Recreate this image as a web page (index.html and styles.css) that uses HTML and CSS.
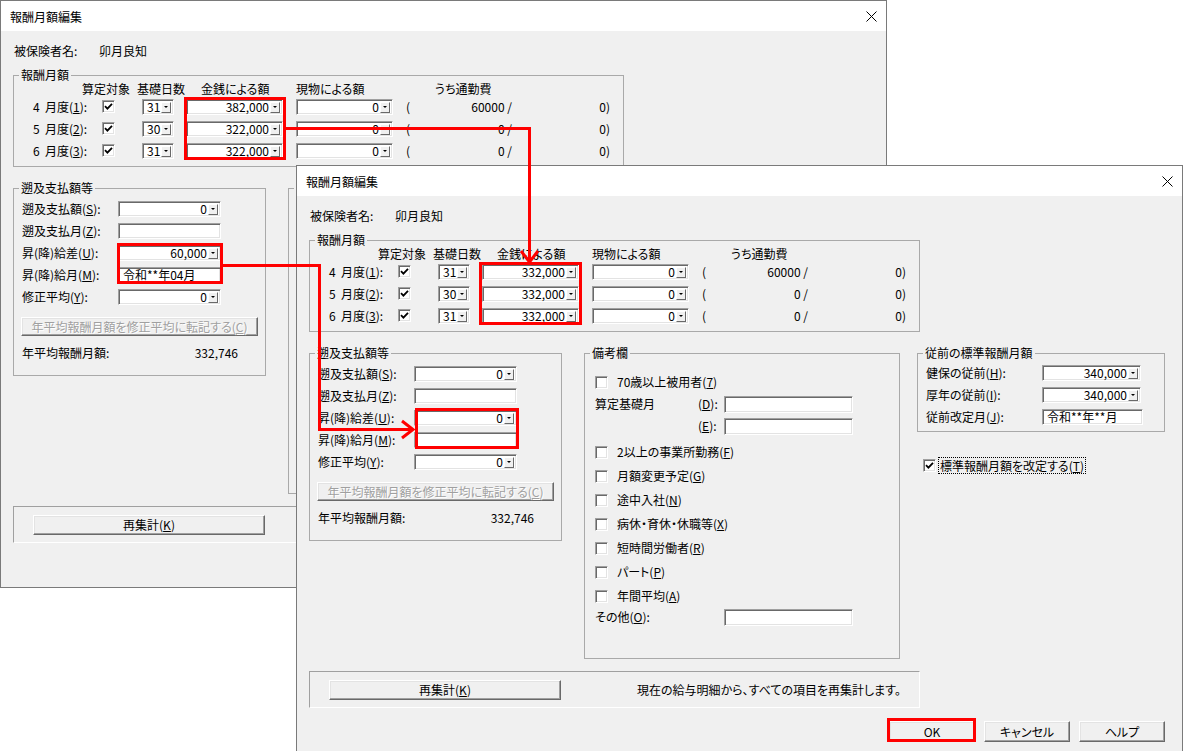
FILE: index.html
```html
<!doctype html>
<html lang="ja">
  <head>
    <meta charset="utf-8">
    <meta name="viewport" content="width=device-width, initial-scale=1">
    <title>報酬月額編集</title>
    <link rel="stylesheet" href="styles.css">
  </head>
  <body>
    <div class="desk">

      <!-- back window (before); the parts under the front window are left out -->
      <div class="win win-back">
        <div class="titlebar">
          <span>報酬月額編集</span>
          <svg width="11" height="11" viewBox="0 0 11 11"><path d="M0.5 0.5L10.5 10.5M10.5 0.5L0.5 10.5" stroke="#000" fill="none"/></svg>
        </div>
        <div class="dlg">
          <div class="insured"><span>被保険者名:</span><span>卯月良知</span></div>
          <fieldset class="grp-month">
            <legend>報酬月額</legend>
            <div class="months">
              <span></span><span>算定対象</span><span>基礎日数</span><span class="h-money">金銭による額</span><span>現物による額</span><span class="h-comm">うち通勤費</span><span></span>

              <span class="mlabel"><b class="mno">4</b>月度(<u>1</u>):</span>
              <span class="chk"><svg width="9" height="9" viewBox="0 0 9 9"><path d="M1 4.2l2.4 2.4L8 1.8" fill="none" stroke="#000" stroke-width="1.8"/></svg></span>
              <div class="fld days">31<i class="drop"></i></div>
              <div class="fld money">382,000<i class="drop"></i></div>
              <div class="fld money">0<i class="drop"></i></div>
              <span class="comm"><span>(</span><span>60000 /</span></span>
              <span class="tail">0)</span>

              <span class="mlabel"><b class="mno">5</b>月度(<u>2</u>):</span>
              <span class="chk"><svg width="9" height="9" viewBox="0 0 9 9"><path d="M1 4.2l2.4 2.4L8 1.8" fill="none" stroke="#000" stroke-width="1.8"/></svg></span>
              <div class="fld days">30<i class="drop"></i></div>
              <div class="fld money">322,000<i class="drop"></i></div>
              <div class="fld money">0<i class="drop"></i></div>
              <span class="comm"><span>(</span><span>0 /</span></span>
              <span class="tail">0)</span>

              <span class="mlabel"><b class="mno">6</b>月度(<u>3</u>):</span>
              <span class="chk"><svg width="9" height="9" viewBox="0 0 9 9"><path d="M1 4.2l2.4 2.4L8 1.8" fill="none" stroke="#000" stroke-width="1.8"/></svg></span>
              <div class="fld days">31<i class="drop"></i></div>
              <div class="fld money">322,000<i class="drop"></i></div>
              <div class="fld money">0<i class="drop"></i></div>
              <span class="comm"><span>(</span><span>0 /</span></span>
              <span class="tail">0)</span>
            </div>
          </fieldset>

          <div class="mid">
            <fieldset class="grp-retro">
              <legend>遡及支払額等</legend>
              <div class="retro">
                <div class="form">
                  <span>遡及支払額(<u>S</u>):</span><div class="fld">0<i class="drop"></i></div>
                  <span>遡及支払月(<u>Z</u>):</span><div class="fld txt"></div>
                  <span>昇(降)給差(<u>U</u>):</span><div class="fld">60,000<i class="drop"></i></div>
                  <span>昇(降)給月(<u>M</u>):</span><div class="fld txt">令和**年04月</div>
                  <span>修正平均(<u>Y</u>):</span><div class="fld">0<i class="drop"></i></div>
                </div>
                <button class="btn btn-copy" disabled>年平均報酬月額を修正平均に転記する(<u>C</u>)</button>
                <div class="annual"><span>年平均報酬月額:</span><span>332,746</span></div>
              </div>
            </fieldset>
            <fieldset class="grp-memo">
              <legend></legend>
            </fieldset>
          </div>

          <div class="recalc">
            <button class="btn btn-recalc">再集計(<u>K</u>)</button>
          </div>
        </div>
      </div>

      <!-- front window (after) -->
      <div class="win win-front">
        <div class="titlebar">
          <span>報酬月額編集</span>
          <svg width="11" height="11" viewBox="0 0 11 11"><path d="M0.5 0.5L10.5 10.5M10.5 0.5L0.5 10.5" stroke="#000" fill="none"/></svg>
        </div>
        <div class="dlg">
          <div class="insured"><span>被保険者名:</span><span>卯月良知</span></div>
          <fieldset class="grp-month">
            <legend>報酬月額</legend>
            <div class="months">
              <span></span><span>算定対象</span><span>基礎日数</span><span class="h-money">金銭による額</span><span>現物による額</span><span class="h-comm">うち通勤費</span><span></span>

              <span class="mlabel"><b class="mno">4</b>月度(<u>1</u>):</span>
              <span class="chk"><svg width="9" height="9" viewBox="0 0 9 9"><path d="M1 4.2l2.4 2.4L8 1.8" fill="none" stroke="#000" stroke-width="1.8"/></svg></span>
              <div class="fld days">31<i class="drop"></i></div>
              <div class="fld money">332,000<i class="drop"></i></div>
              <div class="fld money">0<i class="drop"></i></div>
              <span class="comm"><span>(</span><span>60000 /</span></span>
              <span class="tail">0)</span>

              <span class="mlabel"><b class="mno">5</b>月度(<u>2</u>):</span>
              <span class="chk"><svg width="9" height="9" viewBox="0 0 9 9"><path d="M1 4.2l2.4 2.4L8 1.8" fill="none" stroke="#000" stroke-width="1.8"/></svg></span>
              <div class="fld days">30<i class="drop"></i></div>
              <div class="fld money">332,000<i class="drop"></i></div>
              <div class="fld money">0<i class="drop"></i></div>
              <span class="comm"><span>(</span><span>0 /</span></span>
              <span class="tail">0)</span>

              <span class="mlabel"><b class="mno">6</b>月度(<u>3</u>):</span>
              <span class="chk"><svg width="9" height="9" viewBox="0 0 9 9"><path d="M1 4.2l2.4 2.4L8 1.8" fill="none" stroke="#000" stroke-width="1.8"/></svg></span>
              <div class="fld days">31<i class="drop"></i></div>
              <div class="fld money">332,000<i class="drop"></i></div>
              <div class="fld money">0<i class="drop"></i></div>
              <span class="comm"><span>(</span><span>0 /</span></span>
              <span class="tail">0)</span>
            </div>
          </fieldset>

          <div class="mid">
            <fieldset class="grp-retro">
              <legend>遡及支払額等</legend>
              <div class="retro">
                <div class="form">
                  <span>遡及支払額(<u>S</u>):</span><div class="fld">0<i class="drop"></i></div>
                  <span>遡及支払月(<u>Z</u>):</span><div class="fld txt"></div>
                  <span>昇(降)給差(<u>U</u>):</span><div class="fld">0<i class="drop"></i></div>
                  <span>昇(降)給月(<u>M</u>):</span><div class="fld txt"></div>
                  <span>修正平均(<u>Y</u>):</span><div class="fld">0<i class="drop"></i></div>
                </div>
                <button class="btn btn-copy" disabled>年平均報酬月額を修正平均に転記する(<u>C</u>)</button>
                <div class="annual"><span>年平均報酬月額:</span><span>332,746</span></div>
              </div>
            </fieldset>

            <fieldset class="grp-memo">
              <legend>備考欄</legend>
              <div class="memo">
                <div class="cb"><span class="chk"></span><span>70歳以上被用者(<u>7</u>)</span></div>
                <div class="memo-in up"><span class="k">算定基礎月</span><span class="p">(<u>D</u>):</span><div class="fld txt"></div></div>
                <div class="memo-in up"><span class="k"></span><span class="p">(<u>E</u>):</span><div class="fld txt"></div></div>
                <div class="cb down"><span class="chk"></span><span>2以上の事業所勤務(<u>F</u>)</span></div>
                <div class="cb"><span class="chk"></span><span>月額変更予定(<u>G</u>)</span></div>
                <div class="cb"><span class="chk"></span><span>途中入社(<u>N</u>)</span></div>
                <div class="cb"><span class="chk"></span><span>病休・育休・休職等(<u>X</u>)</span></div>
                <div class="cb"><span class="chk"></span><span>短時間労働者(<u>R</u>)</span></div>
                <div class="cb"><span class="chk"></span><span>パート(<u>P</u>)</span></div>
                <div class="cb"><span class="chk"></span><span>年間平均(<u>A</u>)</span></div>
                <div class="memo-in last"><span class="k wide">その他(<u>O</u>):</span><div class="fld txt"></div></div>
              </div>
            </fieldset>

            <div class="right-col">
              <fieldset class="grp-prev">
                <legend>従前の標準報酬月額</legend>
                <div class="prev">
                  <div class="form prev-form">
                    <span>健保の従前(<u>H</u>):</span><div class="fld">340,000<i class="drop"></i></div>
                    <span>厚年の従前(<u>I</u>):</span><div class="fld">340,000<i class="drop"></i></div>
                    <span>従前改定月(<u>J</u>):</span><div class="fld txt wide">令和**年**月</div>
                  </div>
                </div>
              </fieldset>
              <div class="revise">
                <span class="chk"><svg width="9" height="9" viewBox="0 0 9 9"><path d="M1 4.2l2.4 2.4L8 1.8" fill="none" stroke="#000" stroke-width="1.8"/></svg></span>
                <span class="focus">標準報酬月額を改定する(<u>T</u>)</span>
              </div>
            </div>
          </div>

          <div class="recalc">
            <button class="btn btn-recalc">再集計(<u>K</u>)</button>
            <span>現在の給与明細から、すべての項目を再集計します。</span>
          </div>

          <div class="footer">
            <button class="btn">OK</button>
            <button class="btn">キャンセル</button>
            <button class="btn">ヘルプ</button>
          </div>
        </div>
      </div>

      <!-- red call-outs -->
      <svg class="marks" width="1183" height="751" viewBox="0 0 1183 751">
        <g fill="none" stroke="#f00" stroke-width="3">
          <rect x="185.5" y="98.5" width="99" height="60"/>
          <polyline points="286,128.5 529.5,128.5 529.5,261"/>
          <polyline points="521,251 529.5,262 538,251"/>
          <rect x="480.5" y="263.5" width="100" height="60"/>
          <rect x="118.5" y="244.5" width="103" height="38"/>
          <polyline points="223,265.5 319.5,265.5 319.5,429.5 412,429.5"/>
          <polyline points="402,421 413,429.5 402,438"/>
          <rect x="416.5" y="409.5" width="101" height="38"/>
          <rect x="888.5" y="719.5" width="86" height="21"/>
        </g>
      </svg>
    </div>
  </body>
</html>
```

FILE: styles.css
```css
body {
  margin: 0;
  background: #fff;
  font-family: "Noto Sans CJK JP", "Noto Sans", sans-serif;
  font-size: 12px;
  font-feature-settings: "palt";
  color: #000;
}
u {
  text-underline-offset: 1px;
}
.desk {
  position: relative;
  width: 1183px;
  height: 751px;
  overflow: hidden;
}
.win {
  position: absolute;
  width: 887px;
  height: 588px;
  box-sizing: border-box;
  border: 1px solid #7a7a7a;
  background: #f0f0f0;
}
.win-back {
  left: 0;
  top: 0;
}
.win-front {
  left: 296px;
  top: 165px;
}
.titlebar {
  height: 30px;
  background: #fff;
  display: flex;
  align-items: center;
  justify-content: space-between;
  padding: 0 9px;
}
.titlebar svg {
  display: block;
}
.dlg {
  padding: 12px 17px 0 12px;
  line-height: 16px;
  white-space: nowrap;
}
.insured {
  display: flex;
  height: 16px;
  padding-left: 1px;
}
.insured span:first-child {
  width: 85px;
}

/* group boxes */
fieldset {
  margin: 0;
  padding: 0;
  min-width: 0;
  box-sizing: border-box;
  border: 1px solid #a9a9a9;
}
legend {
  margin-left: 5px;
  padding: 0 2px;
  line-height: 12px;
}
legend:empty {
  height: 12px;
}
.grp-month {
  margin-top: 10px;
  width: 611px;
}
.months {
  display: grid;
  grid-template-columns: 49px 55px 49px 110px 110px 114px 91px;
  grid-template-rows: 18px repeat(3, 22px);
  align-items: start;
  padding: 0 0 1px 19px;
}
.mlabel {
  white-space: nowrap;
}
.mno {
  display: inline-block;
  width: 12px;
  font-weight: normal;
}
.h-money {
  margin-left: 15px;
}
.h-comm {
  margin-left: 29px;
}
.comm {
  display: flex;
  justify-content: space-between;
  padding-right: 8px;
}
.tail {
  text-align: right;
  padding-right: 1px;
}
.months .chk {
  margin: 1px 0 0 20px;
}
.months .days {
  margin-left: 5px;
  width: 32px;
}
.months .money {
  width: 97px;
}

/* edit fields */
.fld {
  box-sizing: border-box;
  height: 16px;
  background: #fff;
  border: 1px solid;
  border-color: #a0a0a0 #fff #fff #a0a0a0;
  box-shadow: inset 1px 1px 0 #696969, inset -1px -1px 0 #e3e3e3;
  display: flex;
  align-items: center;
  justify-content: flex-end;
  padding: 0 2px 0 4px;
  line-height: 14px;
  white-space: nowrap;
}
.fld.txt {
  justify-content: flex-start;
}
.drop {
  width: 10px;
  height: 11px;
  box-sizing: border-box;
  margin-left: 1px;
  background: #f0f0f0;
  border: 1px solid;
  border-color: #fff #696969 #696969 #fff;
  display: flex;
  align-items: center;
  justify-content: center;
}
.drop::after {
  content: "";
  border-left: 2px solid transparent;
  border-right: 2px solid transparent;
  border-top: 2px solid #000;
}
.chk {
  width: 13px;
  height: 13px;
  box-sizing: border-box;
  background: #fff;
  border: 1px solid;
  border-color: #a0a0a0 #fff #fff #a0a0a0;
  box-shadow: inset 1px 1px 0 #696969, inset -1px -1px 0 #e3e3e3;
  display: flex;
  align-items: center;
  justify-content: center;
}
.chk svg {
  display: block;
}

/* buttons */
.btn {
  box-sizing: border-box;
  height: 21px;
  width: 86px;
  padding: 0;
  font: inherit;
  color: #000;
  background: #f0f0f0;
  border: 1px solid;
  border-color: #fff #696969 #696969 #fff;
  box-shadow: inset -1px -1px 0 #a0a0a0, inset 1px 1px 0 #e3e3e3;
  display: flex;
  align-items: center;
  justify-content: center;
}
.btn:disabled {
  color: #a0a0a0;
  text-shadow: 1px 1px 0 #fff;
}

/* middle row */
.mid {
  display: flex;
  align-items: flex-start;
  margin-top: 15px;
}
.grp-retro {
  width: 253px;
  height: 194px;
}
.retro {
  padding: 7px 0 0 8px;
}
.form {
  display: grid;
  grid-template-columns: 96px 103px;
  grid-auto-rows: 16px;
  row-gap: 6px;
  align-items: center;
}
.btn-copy {
  margin: 12px 0 0 -1px;
  width: 237px;
  height: 19px;
}
.annual {
  display: flex;
  justify-content: space-between;
  width: 216px;
  margin-top: 9px;
}
.grp-memo {
  margin-left: 22px;
  width: 316px;
  height: 312px;
}
.memo {
  display: flex;
  flex-direction: column;
  gap: 6px;
  padding: 14px 0 0 10px;
}
.cb,
.memo-in {
  display: flex;
  align-items: center;
  height: 18px;
}
.cb {
  gap: 9px;
}
.memo-in .k {
  width: 103px;
}
.memo-in .k.wide {
  width: 129px;
}
.memo-in .p {
  width: 26px;
}
.memo-in .fld {
  width: 129px;
  height: 17px;
}
.up {
  margin-top: -2px;
}
.down {
  margin-top: 2px;
}
.last {
  margin-top: -3px;
}
.right-col {
  margin-left: 17px;
  width: 248px;
}
.grp-prev {
  height: 85px;
}
.prev {
  padding: 6px 0 0 8px;
}
.prev-form {
  grid-template-columns: 116px 99px;
}
.prev-form .wide {
  width: 101px;
}
.revise {
  display: flex;
  align-items: center;
  gap: 3px;
  height: 16px;
  margin: 25px 0 0 6px;
}
.focus {
  outline: 1px dotted #000;
  padding: 0 1px;
  line-height: 15px;
}

/* bottom */
.recalc {
  margin-top: 12px;
  width: 611px;
  height: 37px;
  box-sizing: border-box;
  border: 1px solid;
  border-color: #a0a0a0 #fff #fff #a0a0a0;
  display: flex;
  align-items: center;
  gap: 76px;
  padding-left: 19px;
}
.btn-recalc {
  width: 232px;
  height: 20px;
}
.footer {
  display: flex;
  justify-content: flex-end;
  gap: 9px;
  margin-top: 13px;
}
.marks {
  position: absolute;
  left: 0;
  top: 0;
  pointer-events: none;
}
```
